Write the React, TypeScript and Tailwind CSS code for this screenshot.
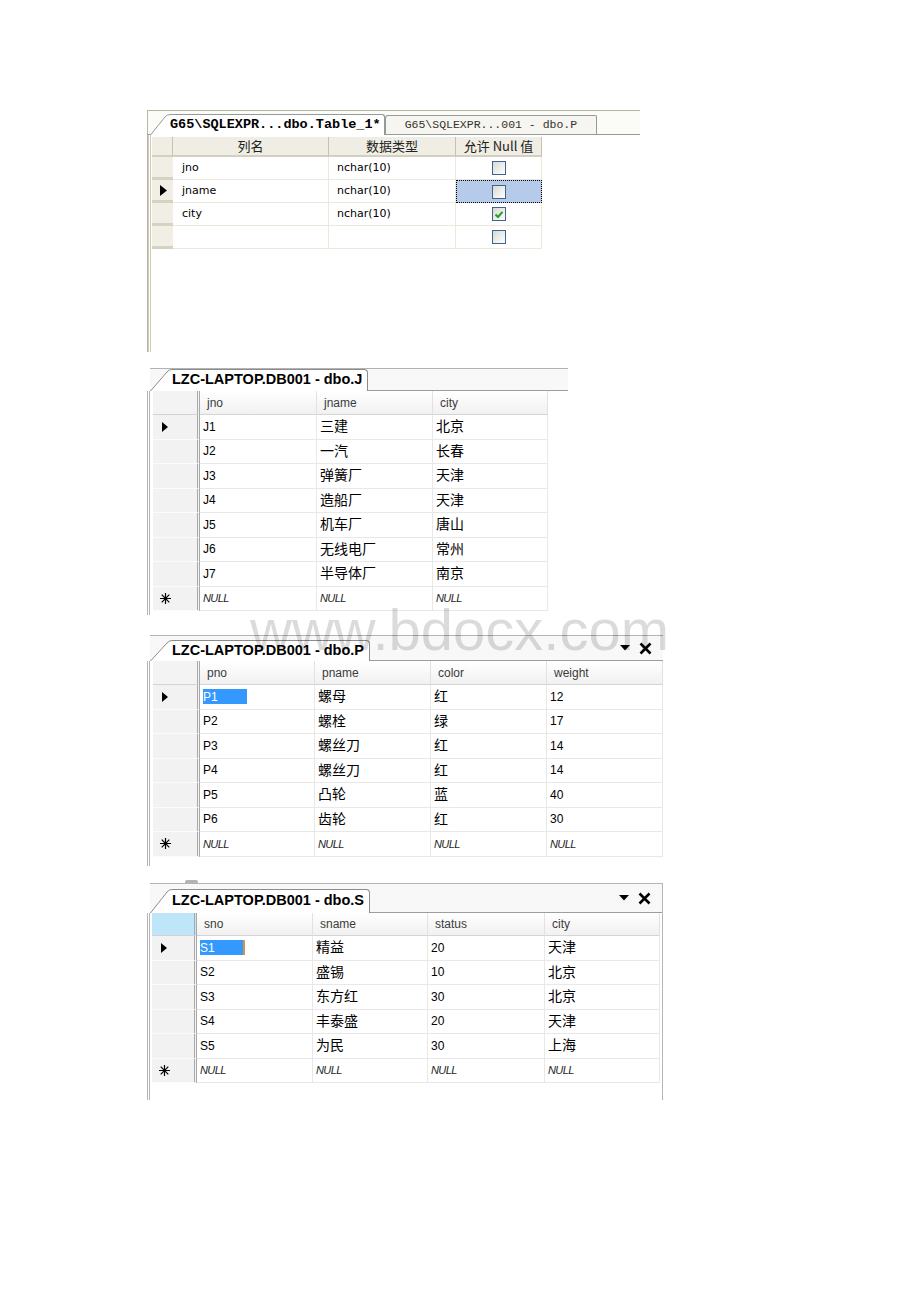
import React from "react";

const CJK_RE = /[\u3400-\u9fff]/;

type Col = { name: string; w: string };

function RowArrow({ w, h }: { w: number; h: number }) {
  return (
    <svg width={w} height={h} viewBox={`0 0 ${w} ${h}`} className="block">
      <path d={`M0 0L${w} ${h / 2}L0 ${h}Z`} fill="#000" />
    </svg>
  );
}

function NewRowStar() {
  return (
    <svg width="11" height="11" viewBox="0 0 11 11" className="block" stroke="#000" strokeWidth="1.2">
      <path d="M5.5 0V11M0 5.5H11M1.7 1.7L9.3 9.3M9.3 1.7L1.7 9.3" />
    </svg>
  );
}

// slanted left edge of a document tab
function Slant({ w, h, stroke }: { w: number; h: number; stroke: string }) {
  return (
    <svg width={w} height={h} viewBox={`0 0 ${w} ${h}`} className="block shrink-0">
      <path d={`M0 ${h}L${w - 5} 3Q${w - 3} 0.5 ${w} 0.5V${h}Z`} fill="#fff" />
      <path d={`M0.5 ${h}L${w - 5} 3Q${w - 3} 0.5 ${w} 0.5`} fill="none" stroke={stroke} />
    </svg>
  );
}

function XpCheck({ checked }: { checked?: boolean }) {
  return (
    <span className="flex h-[14px] w-[14px] items-center justify-center border border-[#3d6591] bg-linear-to-br from-[#d9d9d3] to-white">
      {checked && (
        <svg width="10" height="9" viewBox="0 0 10 9">
          <path d="M1.5 4.5L4 7L8.5 1.8" stroke="#21a121" strokeWidth="2" fill="none" />
        </svg>
      )}
    </span>
  );
}

function DesignPanel() {
  const rows = [
    { name: "jno", type: "nchar(10)", nul: false },
    { name: "jname", type: "nchar(10)", nul: false, current: true },
    { name: "city", type: "nchar(10)", nul: true },
    { name: "", type: "", nul: false },
  ];
  return (
    <div className="flex h-[242px] w-[493px] flex-col border-l border-t border-[#b9b5a4]">
      <div className="flex h-[24px] items-end border-b border-[#919b9c] bg-[#fbfbf8] pl-[2px]">
        <div className="relative z-10 -mb-px flex items-end">
          <Slant w={20} h={21} stroke="#919b9c" />
          <div className="flex h-[21px] items-center rounded-tr-[3px] border-r border-t border-[#919b9c] bg-white pr-[3px] font-['Liberation_Mono',monospace] text-[13.5px] font-bold">
            G65\SQLEXPR...dbo.Table_1*
          </div>
        </div>
        <div className="flex h-[19px] items-center rounded-tl-[3px] rounded-tr-[2px] border border-b-0 border-[#919b9c] bg-[#f6f5ef] px-[19px] font-['Liberation_Mono',monospace] text-[11.5px] text-[#333]">
          G65\SQLEXPR...001 - dbo.P
        </div>
      </div>
      <div className="flex flex-1 flex-col border-l-[3px] border-double border-[#cfcbb9] bg-white pl-[1px]">
        <div className="mt-[2px] flex h-[20px] font-['Noto_Sans_CJK_SC',sans-serif] text-[13px] text-[#222]">
          <div className="w-[21px] border-b-[2px] border-r border-[#d4d0bf] border-r-[#c6c2b1] bg-[#efede4]" />
          <div className="flex w-[156px] items-center justify-center border-b-[2px] border-r border-[#d4d0bf] border-r-[#c6c2b1] bg-[#efede4] pb-[1px]">
            列名
          </div>
          <div className="flex w-[127px] items-center justify-center border-b-[2px] border-r border-[#d4d0bf] border-r-[#c6c2b1] bg-[#efede4] pb-[1px]">
            数据类型
          </div>
          <div className="flex w-[86px] items-center justify-center border-b-[2px] border-r border-[#d4d0bf] border-r-[#c6c2b1] bg-[#efede4] pb-[1px]">
            允许 Null 值
          </div>
        </div>
        {rows.map((r, i) => (
          <div key={i} className="flex h-[23px] font-['DejaVu_Sans',sans-serif] text-[11px]">
            <div className="flex w-[21px] items-center justify-center border-b-[3px] border-[#d6d2c1] bg-[#f0eee5] pl-[2px]">
              {r.current && <RowArrow w={7} h={11} />}
            </div>
            <div className="flex w-[156px] items-center border-b border-r border-[#ebe8dc] pl-[9px]">{r.name}</div>
            <div className="flex w-[127px] items-center border-b border-r border-[#ebe8dc] pl-[8px]">{r.type}</div>
            <div
              className={
                r.current
                  ? "flex w-[86px] items-center justify-center border border-dotted border-black bg-[#b6cbe9]"
                  : "flex w-[86px] items-center justify-center border-b border-r border-[#ebe8dc]"
              }
            >
              <XpCheck checked={r.nul} />
            </div>
          </div>
        ))}
      </div>
    </div>
  );
}

function TopControls() {
  return (
    <div className="flex items-center gap-[9px] self-center">
      <svg width="10" height="6" viewBox="0 0 10 6" className="block">
        <path d="M0 0H10L5 5.5Z" fill="#000" />
      </svg>
      <svg width="13" height="13" viewBox="0 0 13 13" className="block">
        <path d="M1.5 1.5L11.5 11.5M11.5 1.5L1.5 11.5" stroke="#000" strokeWidth="2.6" />
      </svg>
    </div>
  );
}

type PanelProps = {
  title: string;
  cols: Col[];
  rows: string[][];
  outer: string;
  strip: string;
  tabH: number;
  tabClass: string;
  close?: boolean;
  header: string;
  headBlue?: boolean;
  rowHead: string;
  body: string;
  select?: "plain" | "cursor";
  tail: string;
};

function GridPanel(p: PanelProps) {
  return (
    <div className={`flex flex-col ${p.outer}`}>
      <div className={`ml-[3px] flex items-end justify-between border-b border-t border-b-[#9d9d9d] border-t-[#b3b3b3] bg-[#f8f8f8] ${p.strip}`}>
        <div className="relative z-10 -mb-px flex items-end">
          <Slant w={22} h={p.tabH} stroke="#8c8c8c" />
          <div className={`flex items-center rounded-tr-[4px] border-r border-t border-[#8c8c8c] bg-white pb-[1px] pr-[5px] text-[14.5px] font-bold ${p.tabClass}`}>
            {p.title}
          </div>
        </div>
        {p.close && (
          <div className="mr-[11px] flex h-full items-center">
            <TopControls />
          </div>
        )}
      </div>
      <div className={`flex flex-col border-l-[3px] border-double border-[#b5b5b5] bg-white ${p.body}`}>
        <div className={`flex ${p.header}`}>
          <div
            className={`${p.rowHead} border-b border-r-[3px] border-double border-b-[#d3d3d3] border-r-[#a9a9a9] ${p.headBlue ? "bg-[#bfe5f9]" : "bg-[#f3f3f3]"}`}
          />
          {p.cols.map((c) => (
            <div
              key={c.name}
              className={`${c.w} flex items-center border-b border-r border-b-[#d5d5d5] border-r-[#e2e2e2] bg-linear-to-b from-white to-[#f1f1f1] pl-[7px] text-[12px] text-[#3c3c3c]`}
            >
              {c.name}
            </div>
          ))}
        </div>
        {p.rows.map((r, i) => {
          const last = i === p.rows.length - 1;
          return (
            <div key={i} className="flex h-[24.5px]">
              <div
                className={`${p.rowHead} flex items-center border-b border-r-[3px] border-double border-b-[#fbfbfb] border-r-[#a9a9a9] bg-[#f2f2f2] ${last ? "pl-[7px]" : "pl-[9px]"}`}
              >
                {i === 0 && <RowArrow w={6} h={10} />}
                {last && <NewRowStar />}
              </div>
              {r.map((v, j) => {
                const sel = i === 0 && j === 0 && p.select;
                const cjk = CJK_RE.test(v);
                return (
                  <div
                    key={j}
                    className={`${p.cols[j].w} flex items-center border-b border-r border-[#e8e8e8] pl-[3px]`}
                  >
                    {last ? (
                      <span className="text-[11px] italic tracking-[-0.6px] text-[#1e1e1e]">{v}</span>
                    ) : sel ? (
                      <span
                        className={
                          p.select === "cursor"
                            ? "flex h-[15px] w-[45px] items-center border-r-2 border-[#d9913f] bg-[#3399ff] text-[12px] text-white"
                            : "flex h-[15px] w-[44px] items-center bg-[#3399ff] text-[12px] text-white"
                        }
                      >
                        {v}
                      </span>
                    ) : (
                      <span className={cjk ? "text-[14px]" : "text-[12px]"}>{v}</span>
                    )}
                  </div>
                );
              })}
            </div>
          );
        })}
        <div className={p.tail} />
      </div>
    </div>
  );
}

export default function App() {
  return (
    <div className="relative h-[1302px] w-[920px] overflow-hidden bg-white font-['Liberation_Sans','Noto_Sans_CJK_SC',sans-serif] text-black">
      <div className="flex flex-col pl-[147px] pt-[110px]">
        <DesignPanel />

        <div className="mt-[16px]">
          <GridPanel
            title="LZC-LAPTOP.DB001 - dbo.J"
            outer="w-[421px]"
            strip="h-[23px]"
            tabH={22}
            tabClass="h-[22px]"
            header="h-[24px]"
            rowHead="w-[47px]"
            body="w-[401px] pl-[3px]"
            tail="h-[4px]"
            cols={[
              { name: "jno", w: "w-[117px]" },
              { name: "jname", w: "w-[116px]" },
              { name: "city", w: "w-[115px]" },
            ]}
            rows={[
              ["J1", "三建", "北京"],
              ["J2", "一汽", "长春"],
              ["J3", "弹簧厂", "天津"],
              ["J4", "造船厂", "天津"],
              ["J5", "机车厂", "唐山"],
              ["J6", "无线电厂", "常州"],
              ["J7", "半导体厂", "南京"],
              ["NULL", "NULL", "NULL"],
            ]}
          />
        </div>

        <div className="mt-[20px]">
          <GridPanel
            title="LZC-LAPTOP.DB001 - dbo.P"
            outer="w-[516px]"
            strip="h-[26px]"
            tabH={21}
            tabClass="h-[21px]"
            close
            header="h-[24px]"
            rowHead="w-[47px]"
            body="pl-[3px]"
            tail="h-[9.5px]"
            select="plain"
            cols={[
              { name: "pno", w: "w-[115px]" },
              { name: "pname", w: "w-[116px]" },
              { name: "color", w: "w-[116px]" },
              { name: "weight", w: "w-[116px]" },
            ]}
            rows={[
              ["P1", "螺母", "红", "12"],
              ["P2", "螺栓", "绿", "17"],
              ["P3", "螺丝刀", "红", "14"],
              ["P4", "螺丝刀", "红", "14"],
              ["P5", "凸轮", "蓝", "40"],
              ["P6", "齿轮", "红", "30"],
              ["NULL", "NULL", "NULL", "NULL"],
            ]}
          />
        </div>

        <div className="ml-[38px] mt-[14px] h-[3px] w-[13px] rounded-t-[2px] bg-[#b4b4b4]" />

        <div>
          <GridPanel
            title="LZC-LAPTOP.DB001 - dbo.S"
            outer="w-[516px] border-r border-[#b5b5b5]"
            strip="h-[30px]"
            tabH={24}
            tabClass="h-[24px]"
            close
            header="h-[23px]"
            headBlue
            rowHead="w-[45px]"
            body="pl-[2px]"
            tail="h-[16.5px]"
            select="cursor"
            cols={[
              { name: "sno", w: "w-[116px]" },
              { name: "sname", w: "w-[115px]" },
              { name: "status", w: "w-[117px]" },
              { name: "city", w: "w-[115px]" },
            ]}
            rows={[
              ["S1", "精益", "20", "天津"],
              ["S2", "盛锡", "10", "北京"],
              ["S3", "东方红", "30", "北京"],
              ["S4", "丰泰盛", "20", "天津"],
              ["S5", "为民", "30", "上海"],
              ["NULL", "NULL", "NULL", "NULL"],
            ]}
          />
        </div>
      </div>

      <div className="pointer-events-none absolute left-[250px] top-[601px] z-20 font-['Liberation_Sans',sans-serif] text-[58px] leading-none text-black/[0.14]">
        www.bdocx.com
      </div>
    </div>
  );
}
